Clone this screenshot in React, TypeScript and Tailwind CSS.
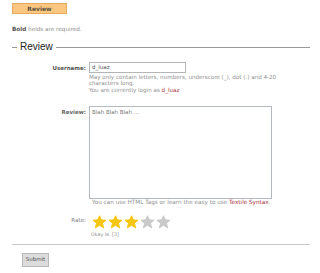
import type React from 'react'

const font = { fontFamily: '"DejaVu Sans", Verdana, sans-serif' }

function Star({ on }: { on: boolean }): React.JSX.Element {
  return (
    <svg width="15" height="14" viewBox="0 0 24 23" className="block">
      <path
        d="M12 1.2 L15.1 8 L22.6 8.6 L16.9 13.5 L18.7 20.9 L12 16.9 L5.3 20.9 L7.1 13.5 L1.4 8.6 L8.9 8 Z"
        fill={on ? '#f6c40a' : '#c9c9c9'}
        stroke={on ? '#f6c40a' : '#c9c9c9'}
        strokeWidth="1.6"
        strokeLinejoin="round"
      />
    </svg>
  )
}

export default function App(): React.JSX.Element {
  const rating = 3
  return (
    <div className="h-[273px] w-[320px] overflow-hidden bg-white pl-[12px] pt-[3px]" style={font}>
      <div className="flex h-[11px] w-[55px] items-center justify-center border border-[#e6ab5e] bg-[#f9c77f] text-[6px] font-bold leading-none text-[#5a5040]">
        Review
      </div>
      <p className="mt-[12px] text-[5.7px] leading-[6px] text-[#909090]">
        <span className="font-bold text-[#555]">Bold</span> fields are required.
      </p>

      <div className="mt-[9px] flex h-[12px] w-[298px] items-center">
        <div className="h-px w-[5px] bg-[#999]" />
        <span
          className="px-[3px] text-[10px] leading-[12px] text-[#222]"
          style={{ fontFamily: '"Liberation Sans", Arial, sans-serif' }}
        >
          Review
        </span>
        <div className="h-px flex-1 bg-[#999]" />
      </div>

      <div className="mt-[9px] grid grid-cols-[74px_1fr] gap-x-[3px]">
        <div className="pt-[3px] text-right text-[5.5px] font-bold leading-[6px] text-[#555]">Username:</div>
        <div>
          <div className="flex h-[11px] w-[97px] items-center border border-[#b5b5b5] px-[2px] text-[5.5px] text-[#555]">
            d_luaz
          </div>
          <p className="mt-[2px] w-[200px] text-[5.6px] leading-[5.5px] text-[#909090]">
            May only contain letters, numbers, underscore (_), dot (.) and 4-20 characters long.
          </p>
          <p className="mt-[1.5px] text-[5.6px] leading-[5.5px] text-[#909090]">
            You are currently login as <span className="text-[#a8333d]">d_luaz</span>
          </p>
        </div>

        <div className="mt-[13px] pt-[3px] text-right text-[5.5px] font-bold leading-[6px] text-[#666]">Review:</div>
        <div className="mt-[13px]">
          <div className="h-[93px] w-[183px] border border-[#b3b9bf] px-[2px] pt-[2px] text-[5.5px] leading-[6px] text-[#777]">
            Blah Blah Blah ...
          </div>
          <p className="mt-[1px] pl-[3px] text-[5.7px] leading-[5.5px] text-[#909090]">
            You can use HTML Tags or learn the easy to use{' '}
            <span className="text-[#a8333d]">Textile Syntax</span>.
          </p>
        </div>

        <div className="mt-[9px] pt-[2px] text-right text-[5.6px] leading-[6px] text-[#808080]">Rate:</div>
        <div className="mt-[9px]">
          <div className="flex gap-[1px] pl-[3px]">
            {[1, 2, 3, 4, 5].map((n) => (
              <Star key={n} on={n <= rating} />
            ))}
          </div>
          <p className="mt-[3px] pl-[2px] text-[4.8px] leading-[5.5px] text-[#909090]">Okay la. [3]</p>
        </div>
      </div>

      <div className="mt-[7px] h-px w-[298px] bg-[#c8c8c8]" />

      <button
        type="button"
        className="ml-[10px] mt-[8px] flex h-[14px] w-[27px] items-center justify-center border border-[#b8b8b8] bg-[#dcdcdc] text-[5.5px] leading-none text-[#555]"
      >
        Submit
      </button>
    </div>
  )
}
